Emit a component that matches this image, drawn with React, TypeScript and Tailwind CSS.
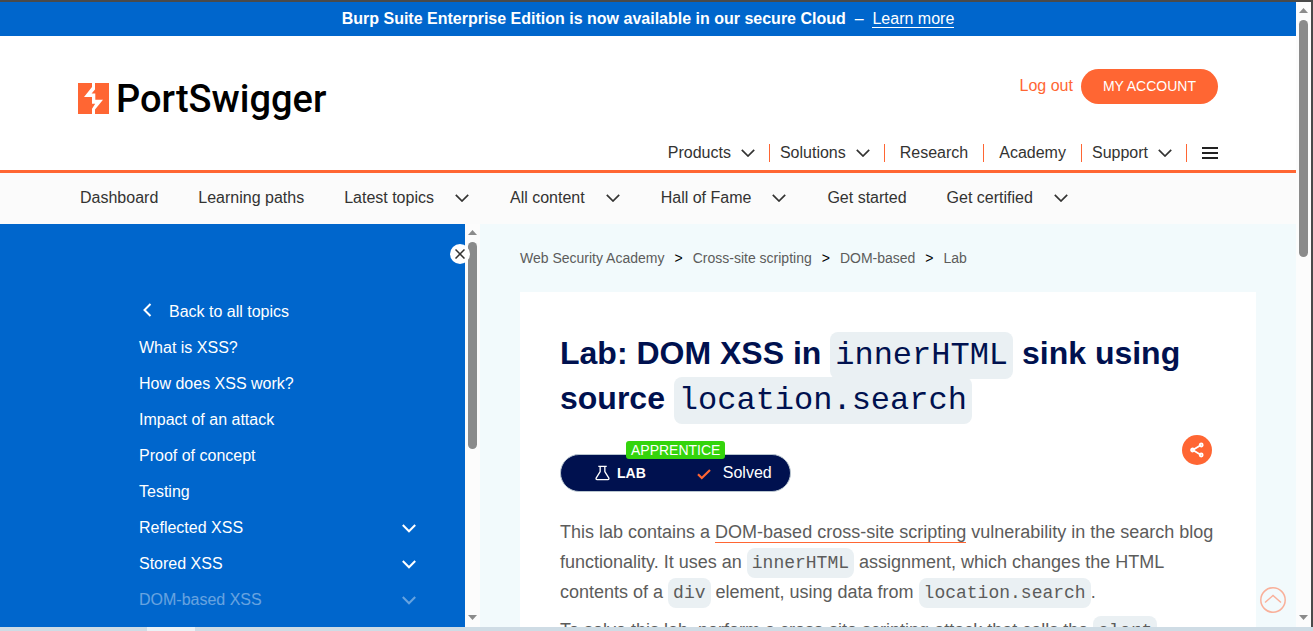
import React from "react";

function Chevron({ className = "" }: { className?: string }) {
  return (
    <svg width="14" height="8" viewBox="0 0 14 8" className={className} fill="none" stroke="currentColor" strokeWidth="1.7" aria-hidden="true">
      <path d="M0.8 0.8 7 7 13.2 0.8" />
    </svg>
  );
}

function ScrollBar({ thumb }: { thumb: string }) {
  return (
    <div className="flex w-[15px] shrink-0 flex-col items-center bg-[#fcfcfc] pb-[7px] pt-[6px]" aria-hidden="true">
      <svg width="9" height="5" viewBox="0 0 9 5" className="shrink-0 fill-[#8b8b8b]">
        <path d="M0 5 4.5 0 9 5z" />
      </svg>
      <div className={`mt-[7px] w-[9px] rounded-full bg-[#8b8b8b] ${thumb}`} />
      <svg width="9" height="5" viewBox="0 0 9 5" className="mt-auto shrink-0 fill-[#8b8b8b]">
        <path d="M0 0 4.5 5 9 0z" />
      </svg>
    </div>
  );
}

function Logo() {
  return (
    <a href="#" className="flex items-center gap-[7px]" aria-label="PortSwigger">
      <svg width="31" height="31" viewBox="0 0 31 31" aria-hidden="true">
        <path fill="#ff6633" d="M0 0h31v31H0z" />
        <path fill="#fff" d="M14 0h3v6.5l-3.4 4h3.7v6.3H25L17 26.500V31h-3v-5.200l3.200-5H14V14H6l8-10z" />
      </svg>
      <span className="pt-[2px] font-[Roboto,sans-serif] text-[38px] font-medium leading-[38px] text-black">PortSwigger</span>
    </a>
  );
}

const mainNav = [
  { label: "Products", menu: true },
  { label: "Solutions", menu: true },
  { label: "Research", menu: false },
  { label: "Academy", menu: false },
  { label: "Support", menu: true },
];

const subNav = [
  { label: "Dashboard", menu: false },
  { label: "Learning paths", menu: false },
  { label: "Latest topics", menu: true },
  { label: "All content", menu: true },
  { label: "Hall of Fame", menu: true },
  { label: "Get started", menu: false },
  { label: "Get certified", menu: true },
];

const topics = ["What is XSS?", "How does XSS work?", "Impact of an attack", "Proof of concept", "Testing"];

const groups = [
  { label: "Reflected XSS", faded: false },
  { label: "Stored XSS", faded: false },
  { label: "DOM-based XSS", faded: true },
];

const crumbs = ["Web Security Academy", "Cross-site scripting", "DOM-based", "Lab"];

function Header() {
  return (
    <header className="border-b-[3px] border-[#ff6633] bg-white px-[78px] pb-[2px] pt-[33px] text-[#333332]">
      <div className="flex items-start justify-between">
        <div className="pt-[9px]">
          <Logo />
        </div>
        <div className="flex items-center gap-2">
          <a href="#" className="pb-[2px] text-[#ff6633]">Log out</a>
          <a href="#" className="flex h-[35px] items-center rounded-full bg-[#ff6633] px-[22px] pb-px text-sm text-white">MY ACCOUNT</a>
        </div>
      </div>
      <nav aria-label="Main" className="mt-5 flex h-[30px] items-center justify-end">
        {mainNav.map((item) => (
          <div key={item.label} className="flex h-[18px] items-center border-r border-[#ff6633]">
            {item.menu ? (
              <button type="button" className="flex items-center gap-[10px] pl-[10px] pr-[14px]">
                {item.label}
                <Chevron />
              </button>
            ) : (
              <a href="#" className="px-[15px]">{item.label}</a>
            )}
          </div>
        ))}
        <button type="button" aria-label="Menu" className="pl-[15px]">
          <svg width="16" height="12" viewBox="0 0 16 12" aria-hidden="true" className="fill-[#222]">
            <path d="M0 0h16v2H0zM0 5h16v2H0zM0 10h16v2H0z" />
          </svg>
        </button>
      </nav>
    </header>
  );
}

function SubNav() {
  return (
    <nav aria-label="Academy" className="flex h-[51px] shrink-0 items-center gap-10 bg-[#fbfbfb] px-20 pb-[2px] text-[#333332]">
      {subNav.map((item) =>
        item.menu ? (
          <button key={item.label} type="button" className="flex items-center gap-[21px] whitespace-nowrap pr-px">
            {item.label}
            <Chevron />
          </button>
        ) : (
          <a key={item.label} href="#" className="whitespace-nowrap">{item.label}</a>
        )
      )}
    </nav>
  );
}

function Sidebar() {
  return (
    <aside className="relative flex w-[480px] shrink-0 overflow-hidden">
      <nav aria-label="Topics" className="flex-1 bg-[#0066cc] pl-[139px] pr-[49px] pt-[70px] leading-9 text-white">
        <a href="#" className="flex items-center">
          <svg width="9" height="14" viewBox="0 0 9 14" className="mb-1 ml-1 mr-[17px]" fill="none" stroke="currentColor" strokeWidth="2" aria-hidden="true">
            <path d="M7.500 1 1.500 7l6 6" />
          </svg>
          Back to all topics
        </a>
        <ul>
          {topics.map((topic) => (
            <li key={topic}>
              <a href="#">{topic}</a>
            </li>
          ))}
          {groups.map((group) => (
            <li key={group.label} className={group.faded ? "opacity-40" : ""}>
              <button type="button" className="flex w-full items-center justify-between">
                {group.label}
                <svg width="14" height="9" viewBox="0 0 14 9" fill="none" stroke="currentColor" strokeWidth="2" aria-hidden="true">
                  <path d="M0.800 1 7 7.300 13.200 1" />
                </svg>
              </button>
            </li>
          ))}
        </ul>
      </nav>
      <ScrollBar thumb="h-[207px]" />
      <button type="button" aria-label="Close" className="absolute right-[10px] top-5 flex size-5 items-center justify-center rounded-full bg-white">
        <svg width="10" height="10" viewBox="0 0 10 10" stroke="#333332" strokeWidth="1.5" aria-hidden="true">
          <path d="M0.500 0.500 9.500 9.500M9.500 0.500 0.500 9.500" />
        </svg>
      </button>
    </aside>
  );
}

function Code({ children }: { children: React.ReactNode }) {
  return (
    <code className="rounded-lg bg-[#eaf0f3] p-[5px] font-['Liberation_Mono',monospace] font-normal leading-none">{children}</code>
  );
}

function LabStatus() {
  return (
    <div className="relative flex h-[38px] w-[231px] items-center rounded-full border border-[#b9c6cf] bg-[#00114f] pl-[34px] text-white">
      <svg width="15" height="16" viewBox="0 0 16 16" fill="none" stroke="currentColor" strokeWidth="1.400" strokeLinejoin="round" aria-hidden="true">
        <path d="M3.500 1h9M5.500 1v5.500L1.200 13.500Q0.800 15 2.200 15h11.600q1.400 0 1-1.500L10.500 6.500V1" />
      </svg>
      <span className="ml-[7px] text-sm font-bold">LAB</span>
      <svg width="14" height="11" viewBox="0 0 14 11" className="ml-[51px] mt-[3px]" fill="none" stroke="#ff6633" strokeWidth="2.200" aria-hidden="true">
        <path d="M1 5.300 4.800 9 13 1" />
      </svg>
      <span className="ml-3">Solved</span>
      <span className="absolute -top-[14px] left-[65px] rounded-[3px] bg-[#34d40c] px-[5px] text-sm leading-[18px]">APPRENTICE</span>
    </div>
  );
}

function Content() {
  return (
    <main className="relative min-w-0 flex-1 overflow-hidden bg-[#f2fafc] px-10">
      <nav aria-label="Breadcrumb" className="flex h-[68px] items-center text-sm text-[#5c5c5b]">
        {crumbs.map((crumb, i) => (
          <React.Fragment key={crumb}>
            {i > 0 && <span className="mx-[10px] text-black">&gt;</span>}
            <a href="#">{crumb}</a>
          </React.Fragment>
        ))}
      </nav>
      <article className="bg-white px-10 pb-10 pt-[39px] text-lg leading-[30px] text-[#5c5c5b]">
        <h1 className="text-[32px] font-bold leading-[45px] text-[#00114f]">
          Lab: DOM XSS in <Code>innerHTML</Code> sink using source <Code>location.search</Code>
        </h1>
        <div className="mb-[25px] mt-[14px] flex items-start justify-between pr-1">
          <div className="pt-[19px] text-base">
            <LabStatus />
          </div>
          <button type="button" aria-label="Share" className="flex size-[30px] items-center justify-center rounded-full bg-[#ff6633]">
            <svg width="14" height="16" viewBox="0 0 14 16" fill="none" stroke="#fff" strokeWidth="1.800" aria-hidden="true">
              <path d="M11 3 2.800 8 11 13" />
              <circle cx="11.200" cy="3" r="1.500" />
              <circle cx="2.600" cy="8" r="1.500" />
              <circle cx="11.200" cy="13" r="1.500" />
            </svg>
          </button>
        </div>
        <p>
          This lab contains a{" "}
          <a href="#" className="border-b border-[#ff6633]">DOM-based cross-site scripting</a> vulnerability in the
          search blog functionality. It uses an <Code>innerHTML</Code> assignment, which changes the HTML contents of a{" "}
          <Code>div</Code> element, using data from <Code>location.search</Code>.
        </p>
        <p className="mt-2">
          To solve this lab, perform a cross-site scripting attack that calls the <Code>alert</Code> function.
        </p>
      </article>
      <button type="button" aria-label="Back to top" className="absolute bottom-[14px] right-[10px] text-[#f9b09a]">
        <svg width="26" height="26" viewBox="0 0 26 26" fill="none" stroke="currentColor" strokeWidth="1.500" aria-hidden="true">
          <circle cx="13" cy="13" r="12.200" />
          <path d="M5 15.500 13 8.500l8 7" />
        </svg>
      </button>
    </main>
  );
}

export default function App() {
  return (
    <div className="flex h-screen flex-col overflow-hidden font-['Liberation_Sans',Arial,sans-serif] text-base">
      <div className="flex min-h-0 flex-1 border-r-2 border-t-2 border-[#4a4a4a]">
        <div className="flex min-w-0 flex-1 flex-col">
          <div className="flex h-[34px] shrink-0 items-center justify-center bg-[#0066cc] text-white">
            <p>
              <strong>Burp Suite Enterprise Edition is now available in our secure Cloud</strong>
              <span>&nbsp; – &nbsp;</span>
              <a href="#" className="border-b border-white">Learn more</a>
            </p>
          </div>
          <Header />
          <SubNav />
          <div className="flex min-h-0 flex-1">
            <Sidebar />
            <Content />
          </div>
        </div>
        <ScrollBar thumb="h-[237px]" />
      </div>
      <div className="flex h-1 shrink-0 bg-[#cfdce5]">
        <div className="ml-[147px] w-12 bg-[#ebf2f6]" />
      </div>
    </div>
  );
}
